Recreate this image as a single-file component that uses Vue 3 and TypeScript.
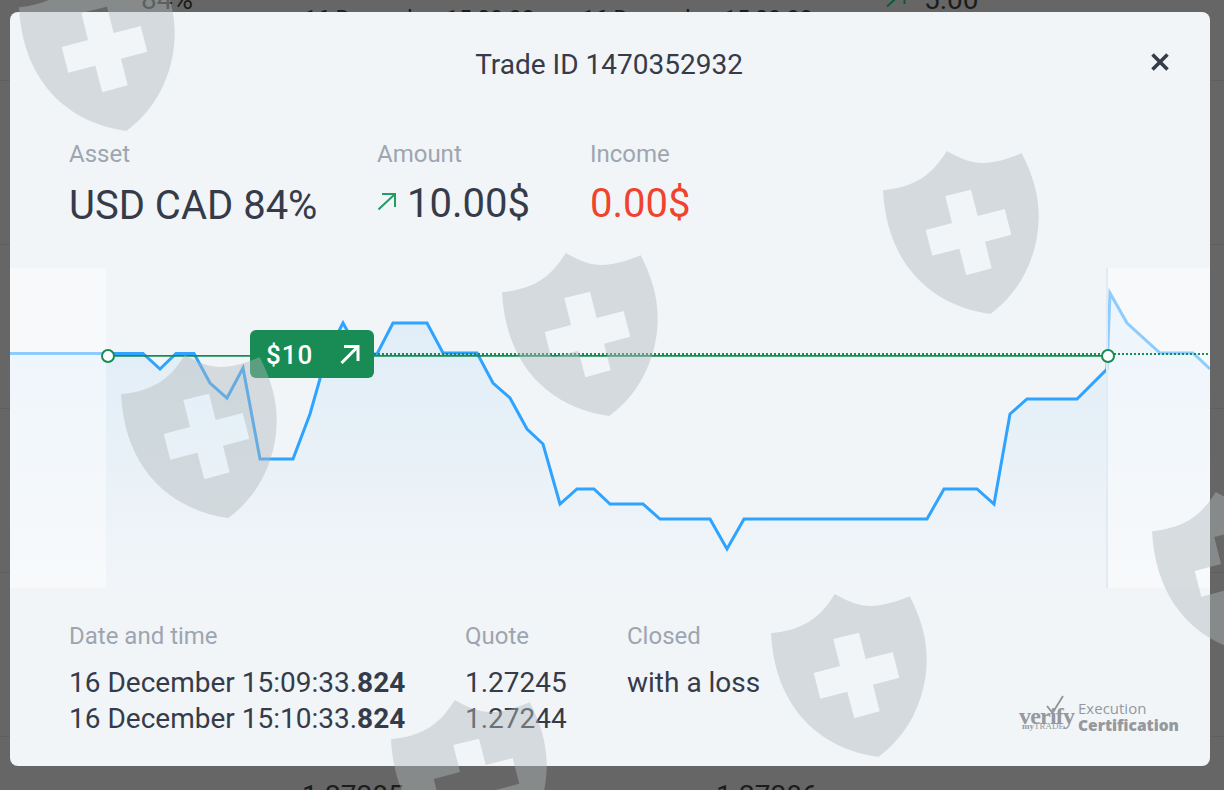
<template>
  <div class="page">
    <div class="behind">
      <div v-for="(row, i) in behindRows" :key="i" class="behind-row">
        <span class="behind-cell b1">{{ row[0] }}</span>
        <span class="behind-cell b2">{{ row[1] }}</span>
        <span class="behind-cell b2b">{{ row[1] }}</span>
        <svg v-if="row[2] === '5.00'" class="behind-arrow" width="20" height="18" viewBox="0 0 20 18">
          <path d="M1 17.500 18 2M6.500 1.500H18.500V15" stroke="#0f5a36" stroke-width="2" fill="none" />
        </svg>
        <span class="behind-cell b3">{{ row[2] }}</span>
      </div>
    </div>

    <div class="modal">
      <header class="modal-head">
        <h2>Trade ID 1470352932</h2>
        <button type="button" class="close" aria-label="Close">
          <svg width="20" height="20" viewBox="0 0 20 20">
            <path d="M2.500 2.500 17.500 17.500M17.500 2.500 2.500 17.500" stroke="#363b4a" stroke-width="3.600" fill="none" />
          </svg>
        </button>
      </header>

      <section class="stats">
        <div class="stat asset">
          <div class="label">Asset</div>
          <div class="value">USD CAD 84%</div>
        </div>
        <div class="stat amount">
          <div class="label">Amount</div>
          <div class="value">
            <svg class="up" width="18" height="17" viewBox="0 0 18 17">
              <path d="M0.500 16.500 17 1M4 1H17V14" stroke="#1f9d62" stroke-width="2" fill="none" />
            </svg>
            10.00$
          </div>
        </div>
        <div class="stat income">
          <div class="label">Income</div>
          <div class="value loss">0.00$</div>
        </div>
      </section>

      <div class="chart">
        <svg class="plot" width="1200" height="320" viewBox="10 268 1200 320">
          <defs>
            <linearGradient id="areaFill" x1="0" y1="0" x2="0" y2="1">
              <stop offset="0" stop-color="#2196f3" stop-opacity="0.09" />
              <stop offset="1" stop-color="#2196f3" stop-opacity="0" />
            </linearGradient>
          </defs>
          <path :d="areaPath" fill="url(#areaFill)" />
          <path :d="linePath" fill="none" stroke="#2ea3ff" stroke-width="3" stroke-linejoin="miter" />
          <rect x="10" y="268" width="96" height="320" fill="#fff" fill-opacity="0.45" />
          <rect x="1108" y="268" width="102" height="320" fill="#fff" fill-opacity="0.45" />
          <rect x="1106" y="268" width="2" height="320" fill="#e3eaf1" />
          <line x1="108" y1="355.800" x2="1108" y2="355.800" stroke="#188c54" stroke-width="1.800" />
          <line x1="374" y1="354" x2="1210" y2="354" stroke="#188c54" stroke-width="2" stroke-dasharray="2 2" />
          <circle cx="108" cy="356" r="6" fill="#fff" stroke="#188c54" stroke-width="2" />
          <circle cx="1108" cy="356" r="6" fill="#fff" stroke="#188c54" stroke-width="2" />
        </svg>
        <div class="tag">
          <span class="tag-text">$10</span>
          <svg width="20" height="20" viewBox="0 0 20 20">
            <path d="M1.500 19 18 2.500M4 2.500H18V17" stroke="#fff" stroke-width="3" fill="none" />
          </svg>
        </div>
      </div>

      <footer class="details">
        <div class="col when">
          <div class="label">Date and time</div>
          <div class="line">16 December 15:09:33.<b>824</b></div>
          <div class="line">16 December 15:10:33.<b>824</b></div>
        </div>
        <div class="col quote">
          <div class="label">Quote</div>
          <div class="line">1.27245</div>
          <div class="line">1.27244</div>
        </div>
        <div class="col closed">
          <div class="label">Closed</div>
          <div class="line">with a loss</div>
        </div>
        <div class="verify">
          <div class="verify-logo">
            <svg class="tick" width="18" height="20" viewBox="0 0 18 20">
              <path d="M1 11 6.500 18 17 1" stroke="#8f9296" stroke-width="1.800" fill="none" />
            </svg>
            <span class="verify-word">verify</span>
            <span class="verify-sub"><b>my</b>TRADE</span>
          </div>
          <div class="verify-text">
            <span>Execution</span>
            <b>Certification</b>
          </div>
        </div>
      </footer>
    </div>

    <svg
      v-for="(pos, i) in shields"
      :key="i"
      class="shield"
      :style="{ left: pos[0] + 'px', top: pos[1] + 'px' }"
      width="156"
      height="163"
      viewBox="0 0 156 163"
    >
      <path fill-rule="evenodd" fill="#b0b8ba" fill-opacity="0.44" :d="shieldPath" />
    </svg>
  </div>
</template>

<script setup lang="ts">
type Point = [number, number]

const behindRows = [
  ['84%', '16 December 15:09:33', '5.00'],
  ['', '', ''],
  ['', '', ''],
  ['', '', ''],
  ['', '', ''],
  ['1.27285', '', '1.27286'],
]

const shields: Point[] = [
  [19, -32],
  [121, 355],
  [502, 253],
  [883, 151],
  [771, 594],
  [391, 700],
  [1152, 492],
]

const shieldPath =
  'M0 39.300C30 36 48 26 63.700 0C78 8 88 12 99.700 12C113 12 127 7 138.700 2.300C150 24 156 45 155.700 67C155 108 135 143 107.300 163C50 155 4 115 0 39.300Z' +
  'M62.300 45 88 38.700 94.700 65 121.700 58 128.300 83.700 102 90.700 108.700 117.300 83.300 124.300 76.300 97.700 49.300 104.700 42.700 79 69 72Z'

const points: Point[] = [
  [10, 353.5], [143, 353.5], [160, 369], [176, 353.5], [194, 353.5], [210, 383], [227, 398], [243, 368],
  [260, 459], [293, 459], [310, 414], [327, 354], [343, 323], [360, 354], [377, 354], [393, 323],
  [427, 323], [443, 353], [477, 353], [493, 383], [510, 398], [527, 429], [543, 444], [560, 504],
  [577, 489], [594, 489], [610, 504], [643, 504], [660, 519], [710, 519], [727, 549], [744, 519],
  [927, 519], [944, 489], [977, 489], [994, 504], [1010, 414], [1027, 399], [1077, 399], [1107, 369],
  [1110, 293], [1127, 323], [1160, 353], [1193, 353], [1210, 369],
]

const linePath = 'M' + points.map((p) => p.join(' ')).join('L')
const areaPath = linePath + 'L1210 588L10 588Z'
</script>

<style>
html,
body {
  margin: 0;
  height: 100%;
  overflow: hidden;
  background: #666;
}
</style>

<style scoped>
.page {
  position: relative;
  width: 1224px;
  height: 790px;
  overflow: hidden;
  background: #666;
  font-family: Roboto, "Liberation Sans", sans-serif;
  color: #363b4a;
}

.behind {
  position: absolute;
  left: 0;
  right: 0;
  top: -83px;
}

.behind-row {
  position: relative;
  height: 163px;
  border-bottom: 1px solid #5f5f5f;
  color: #1c1c1c;
  font-size: 28px;
}

.behind-row:last-child {
  border-bottom: none;
}

.behind-cell {
  position: absolute;
  bottom: 64px;
  line-height: 32px;
  white-space: nowrap;
}

.behind-row:last-child .behind-cell {
  bottom: auto;
  top: 43px;
}

.b1 {
  left: 141px;
}

.b2,
.b2b {
  top: 87px;
  bottom: auto;
  font-size: 23px;
}

.b2 {
  left: 304px;
}

.b2b {
  left: 582px;
}

.b3 {
  left: 924px;
}

.behind-arrow {
  position: absolute;
  left: 886px;
  top: 72px;
}

.behind-row:last-child .b1 {
  left: 302px;
}

.behind-row:last-child .b3 {
  left: 716px;
}

.modal {
  position: absolute;
  left: 10px;
  top: 12px;
  width: 1200px;
  height: 754px;
  border-radius: 8px;
  background: #f1f5f8;
  display: flex;
  flex-direction: column;
}

.modal-head {
  position: relative;
  height: 106px;
  display: flex;
  justify-content: center;
  align-items: flex-start;
  padding: 36px 2px 0 0;
  box-sizing: border-box;
}

.modal-head h2 {
  margin: 0;
  font-size: 28px;
  line-height: 34px;
  font-weight: 400;
}

.close {
  position: absolute;
  right: 40px;
  top: 40px;
  width: 20px;
  height: 20px;
  padding: 0;
  border: none;
  background: none;
}

.close svg {
  display: block;
}

.label {
  font-size: 24px;
  line-height: 32px;
  color: #9ea5b0;
}

.stats {
  display: flex;
  height: 150px;
  padding: 20px 0 0 59px;
  box-sizing: border-box;
}

.stat .value {
  margin-top: 9px;
  font-size: 40px;
  line-height: 50px;
  white-space: nowrap;
}

.asset .value {
  margin-top: 11px;
}

.asset {
  width: 308px;
}

.amount {
  width: 213px;
}

.up {
  margin: 0 1px 0 1px;
  vertical-align: 7px;
}

.loss {
  color: #f0422d;
}

.chart {
  position: relative;
  height: 320px;
}

.plot {
  display: block;
}

.tag {
  position: absolute;
  left: 240px;
  top: 62px;
  width: 124px;
  height: 48px;
  box-sizing: border-box;
  padding: 0 14px 0 16px;
  border-radius: 6px;
  background: #188c54;
  color: #fff;
  display: flex;
  align-items: center;
  justify-content: space-between;
  font-size: 26px;
  font-weight: 500;
  letter-spacing: 1px;
}

.tag-text {
  padding-top: 2px;
}

.details {
  position: relative;
  display: flex;
  padding: 32px 0 0 59px;
}

.details .line {
  font-size: 28px;
  line-height: 36px;
  white-space: nowrap;
}

.details .label {
  margin-bottom: 13px;
}

.details b {
  font-weight: 700;
}

.when {
  width: 396px;
}

.quote {
  width: 162px;
}

.verify {
  position: absolute;
  right: 31px;
  top: 108px;
  display: flex;
  color: #95989c;
}

.verify-logo {
  position: relative;
  width: 54px;
  height: 36px;
  margin-right: 5px;
}

.verify-word {
  position: absolute;
  left: 0;
  top: 8px;
  font-family: "Liberation Serif", serif;
  font-weight: 700;
  font-size: 24px;
  line-height: 24px;
  letter-spacing: -0.8px;
}

.verify-sub {
  position: absolute;
  left: 3px;
  top: 25px;
  font-family: "Liberation Serif", serif;
  font-size: 9px;
  line-height: 10px;
}

.tick {
  position: absolute;
  left: 27px;
  top: -1px;
}

.verify-text {
  display: flex;
  flex-direction: column;
  padding-top: 4px;
  font-family: "Open Sans", sans-serif;
  font-size: 15px;
  line-height: 17px;
}

.verify-text b {
  font-weight: 800;
  font-size: 15.500px;
}

.shield {
  position: absolute;
  pointer-events: none;
}
</style>
